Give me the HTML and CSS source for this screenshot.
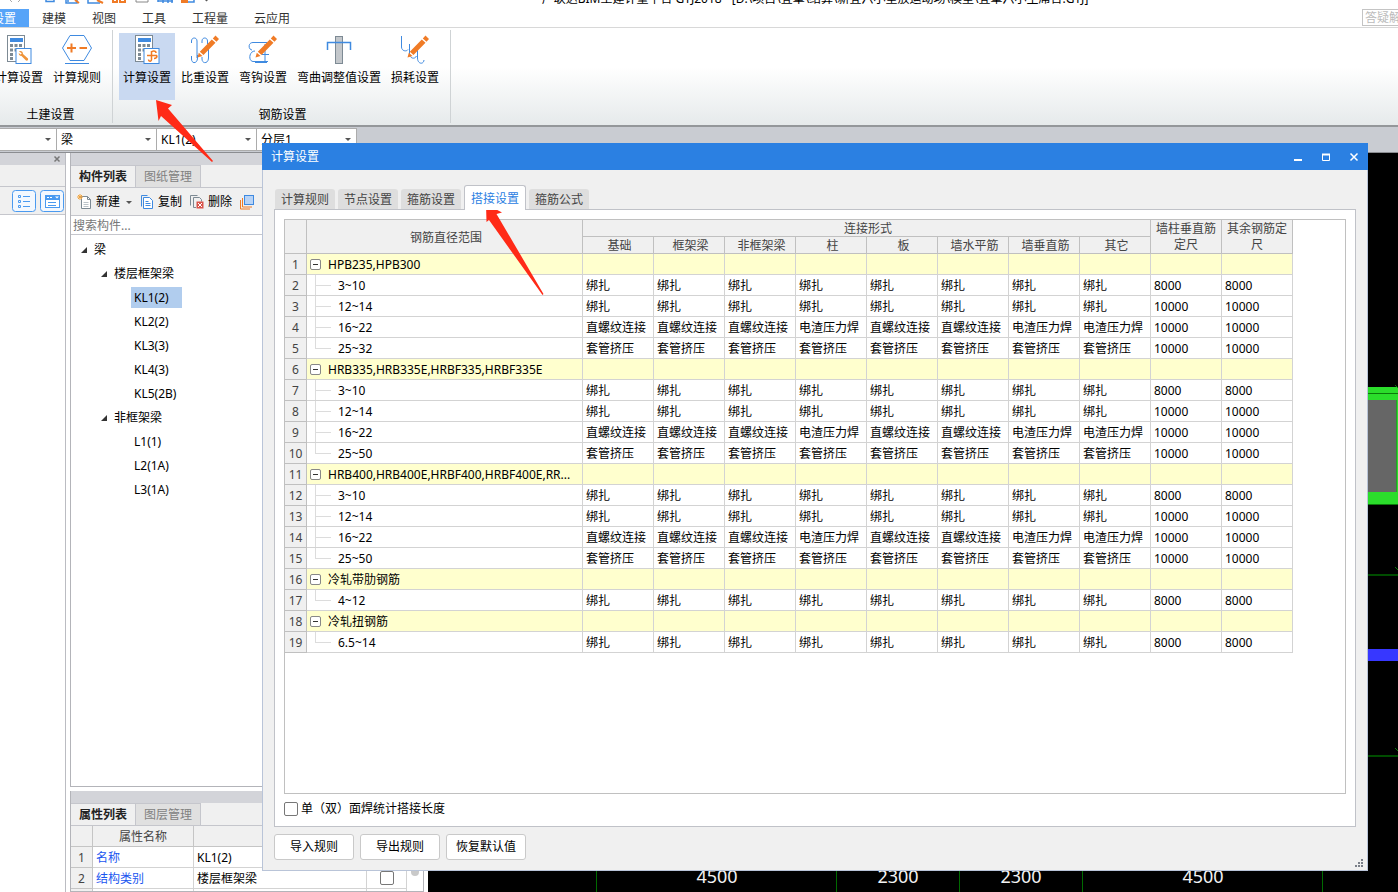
FILE: index.html
```html
<!DOCTYPE html>
<html lang="zh-CN">
<head>
<meta charset="utf-8">
<title>广联达BIM土建计量平台 GTJ2018</title>
<link rel="stylesheet" href="styles.css">
</head>
<body>
<svg class="defs" aria-hidden="true">
  <defs>
    <g id="calc">
      <rect x="3.500" y="1.500" width="17" height="26" fill="#fff" stroke="#7d8a94"/>
      <rect x="6" y="4" width="13" height="4" fill="#3f8ae0"/>
      <path d="M6 10h3v3H6zM10.500 10h3v3h-3zM15 10h3v3h-3zM6 14.500h3v3H6zM10.500 14.500h3v3h-3zM6 19h3v3H6zM6 23h3v3H6z" fill="#7d8a94"/>
      <rect x="12" y="14.500" width="15" height="15" fill="#fff" stroke="#3f8ae0"/>
    </g>
    <g id="pencil">
      <path d="M25.500 1.500l3.500 3.500-2.500 2.700-3.700-3.300zM21.800 5.400l3.700 3.300L13.500 21l-3.700-3.300zM8.800 18.700l3.700 3.200L7.500 23.500z" fill="#f07b26"/>
    </g>
  </defs>
</svg>

<header class="titlebar">
  <svg class="quick" width="220" height="8" viewBox="0 0 220 8" aria-hidden="true">
    <path d="M10 0l2 2M20 0l-2 2" stroke="#aaa" fill="none"/>
    <path d="M46 0v1.500h8V0M66 0v3h11V0M68 0v2M88 0v3h12" stroke="#3f8ae0" stroke-width="1.500" fill="none"/>
    <path d="M75 0l4 3M97 0l6 3M113 0v2h4V0M120 0v2h5V0" stroke="#f07b26" stroke-width="2" fill="none"/>
    <path d="M136 0v2h12V0" stroke="#888" fill="none"/>
    <path d="M158 2V0M163 3V0M168 3V0M172 3V0M158 1h15M188 2h6V0" stroke="#3f8ae0" stroke-width="1.500" fill="none"/>
    <path d="M181 0h7v3h-7z" fill="#f07b26"/>
    <path d="M205 0h3l-1.500 1.500z" fill="#555"/>
  </svg>
  <h1>广联达BIM土建计量平台 GTJ2018 - [D:\项目\宜章\结算\新宜六小室放运动场\模型\宜章六小主席台.GTJ]</h1>
</header>

<nav class="menu">
  <a class="on" href="#">工程设置</a>
  <a href="#">建模</a>
  <a href="#">视图</a>
  <a href="#">工具</a>
  <a href="#">工程量</a>
  <a href="#">云应用</a>
  <input class="ask" type="text" placeholder="答疑解惑" aria-label="答疑解惑">
</nav>

<section class="ribbon">
  <div class="group first">
    <div class="tools">
      <button type="button"><svg width="30" height="30" viewBox="0 0 30 30"><use href="#calc"/><path d="M15 17.500c2-1 4 0 4 2.500l5 4.500c.5 1.500-.5 2.500-2 2L17.500 22c-2 0-3-1.500-2.700-3l1.700 1.500 1.300-1.200z" fill="#f0953a"/></svg>计算设置</button>
      <button type="button"><svg width="30" height="30" viewBox="0 0 30 30"><path d="M8 1.500h14l7.500 12.500L22 26.500H8L.5 14zM3 29.500h24" fill="none" stroke="#3f8ae0"/><path d="M5 14h9M9.500 9.500v9M17.500 14H25" stroke="#f07b26" stroke-width="2"/></svg>计算规则</button>
    </div>
    <div class="caption">土建设置</div>
  </div>
  <div class="group">
    <div class="tools">
      <button type="button" class="pressed"><svg width="30" height="30" viewBox="0 0 30 30"><use href="#calc"/><path d="M19.500 17v8.500c0 2.500-3 2-3 0M15 21.500h10M19.500 18.500c0-2 4.500-2 4.500.5M22 24.500c2.500 0 3-1 3-3" fill="none" stroke="#f07b26" stroke-width="1.500"/></svg>计算设置</button>
      <button type="button"><svg width="30" height="30" viewBox="0 0 30 30"><path d="M1.500 9V7c0-4 5.500-4 5.500 0v17M12 9V7c0-4 5.500-4 5.500 0v3M7.500 21v3c0 6-6 6-6 1v-3M18.500 12v12c0 6-6.500 6-6.500 1v-2" fill="none" stroke="#3f8ae0"/><use href="#pencil"/></svg>比重设置</button>
      <button type="button"><svg width="30" height="30" viewBox="0 0 30 30"><path d="M19 8.500H5c-5 0-5 7-1 7.500M7 17c-6 0-7 10-2 10.500h15M17 10v18M14 20.500h7M7 28.500h12" fill="none" stroke="#3f8ae0"/><use href="#pencil"/></svg>弯钩设置</button>
      <button type="button"><svg width="30" height="30" viewBox="0 0 30 30"><rect x="11.500" y="2.500" width="7" height="27" fill="#c3c7cb" stroke="#7d8a94"/><path d="M3.500 16V8.500h23V16" fill="none" stroke="#3f8ae0" stroke-width="1.500"/></svg>弯曲调整值设置</button>
      <button type="button"><svg width="30" height="30" viewBox="0 0 30 30"><path d="M1.500 2v11c0 4 5 5 6.500 2.500M9.500 10v10c0 4 5 6 7 2M17.500 16v8c0 6 6 7 6.500 2" fill="none" stroke="#3f8ae0"/><use href="#pencil"/></svg>损耗设置</button>
    </div>
    <div class="caption">钢筋设置</div>
  </div>
</section>

<section class="picker">
  <label class="combo short"><select aria-label="楼层"><option></option></select><i></i></label>
  <label class="combo"><select aria-label="构件类型"><option>梁</option></select><i></i></label>
  <label class="combo"><select aria-label="构件"><option>KL1(2)</option></select><i></i></label>
  <label class="combo"><select aria-label="分层"><option>分层1</option></select><i></i></label>
</section>

<main class="work">
  <aside class="nav">
    <div class="grip"><button type="button" aria-label="关闭"><svg width="8" height="8" viewBox="0 0 8 8"><path d="M1.500 1.500l5 5M6.500 1.500l-5 5" stroke="#777" stroke-width="1.500"/></svg></button></div>
    <div class="blank"></div>
    <div class="views">
      <button type="button" aria-label="列表"><svg width="24" height="22" viewBox="0 0 24 22"><rect x=".5" y=".5" width="23" height="21" rx="3" fill="#f3f8fe" stroke="#4a9af0"/><path d="M6.500 5.500h2v2h-2zM6.500 10.500h2v2h-2zM6.500 15.500h2v2h-2z" fill="none" stroke="#4a9af0"/><path d="M11 6.500h7M11 11.500h7M11 16.500h7" stroke="#4a9af0"/></svg></button>
      <button type="button" aria-label="窗口"><svg width="24" height="22" viewBox="0 0 24 22"><rect x=".5" y=".5" width="23" height="21" rx="3" fill="#f3f8fe" stroke="#4a9af0"/><rect x="5.500" y="5.500" width="14" height="12" fill="#fff" stroke="#4a9af0"/><path d="M5 5h15v5H5z" fill="#4a9af0"/><path d="M8 12.500h8M8 15.500h8" stroke="#4a9af0"/><path d="M15 6.500h4l-2 2z" fill="#fff"/><path d="M7 7.500h2M10 7.500h2" stroke="#fff"/></svg></button>
    </div>
  </aside>

  <div class="side">
    <section class="panel list">
      <div class="grip"></div>
      <div class="tabs"><button type="button" class="on">构件列表</button><button type="button">图纸管理</button></div>
      <div class="bar">
        <button type="button"><svg width="16" height="16" viewBox="0 0 16 16"><path d="M4.500 2.500h6l3 3v9h-9z" fill="#fff" stroke="#7d8a94"/><path d="M10.500 2.500v3h3" fill="none" stroke="#7d8a94"/><path d="M6.500 8.500h5M6.500 10.500h5M6.500 12.500h5" stroke="#bbc3c9"/><path d="M3 0v6M0 3h6M1 1l4 4M5 1L1 5" stroke="#f2a33a"/></svg>新建<i></i></button>
        <button type="button"><svg width="16" height="16" viewBox="0 0 16 16"><path d="M2.500 12.500v-11h6" fill="none" stroke="#3f8ae0"/><path d="M4.500 3.500h6l3 3v8h-9z" fill="#fff" stroke="#3f8ae0"/><path d="M6.500 7.500h3M6.500 9.500h5M6.500 11.500h5" stroke="#3f8ae0"/></svg>复制</button>
        <button type="button"><svg width="16" height="16" viewBox="0 0 16 16"><path d="M1.500 11.500v-10h7M4.500 13.500v-10h6l2 2v2" fill="none" stroke="#7d8a94"/><path d="M4.500 13.500H7" stroke="#7d8a94"/><rect x="7.500" y="7.500" width="7" height="7" fill="#d9534a"/><path d="M9 9l4 4M13 9l-4 4" stroke="#fff"/></svg>删除</button>
        <button type="button" aria-label="层间复制"><svg width="16" height="16" viewBox="0 0 16 16"><path d="M1.500 6v9H11M3.500 4v9H13" fill="none" stroke="#f07b26"/><rect x="5.500" y="1.500" width="9" height="9" fill="#b8d3f6" stroke="#3f8ae0"/></svg></button>
      </div>
      <input class="search" type="text" placeholder="搜索构件..." aria-label="搜索构件">
      <ul class="tree">
        <li><span class="node"><b></b>梁</span>
          <ul>
            <li><span class="node"><b></b>楼层框架梁</span>
              <ul>
                <li><span class="leaf on">KL1(2)</span></li>
                <li><span class="leaf">KL2(2)</span></li>
                <li><span class="leaf">KL3(3)</span></li>
                <li><span class="leaf">KL4(3)</span></li>
                <li><span class="leaf">KL5(2B)</span></li>
              </ul>
            </li>
            <li><span class="node"><b></b>非框架梁</span>
              <ul>
                <li><span class="leaf">L1(1)</span></li>
                <li><span class="leaf">L2(1A)</span></li>
                <li><span class="leaf">L3(1A)</span></li>
              </ul>
            </li>
          </ul>
        </li>
      </ul>
    </section>
    <section class="panel props">
      <div class="grip"></div>
      <div class="tabs"><button type="button" class="on">属性列表</button><button type="button">图层管理</button></div>
      <div class="scrolled">
        <table class="grid">
          <colgroup><col class="c-no"><col class="c-name"><col><col class="c-add"></colgroup>
          <thead><tr><th></th><th>属性名称</th><th></th><th></th></tr></thead>
          <tbody>
            <tr><th>1</th><td class="link">名称</td><td>KL1(2)</td><td></td></tr>
            <tr><th>2</th><td class="link">结构类别</td><td>楼层框架梁</td><td class="mid"><input type="checkbox" aria-label="附加"></td></tr>
            <tr><th></th><td></td><td></td><td></td></tr>
          </tbody>
        </table>
        <div class="track"><span></span></div>
      </div>
    </section>
  </div>

  <div class="canvas">
    <svg width="970" height="739" viewBox="0 0 970 739">
      <path d="M930 234h40v117h-40z" fill="#2bdd2b"/>
      <path d="M930 240.500h40M930 351.500h40" stroke="#0b7a0b"/>
      <path d="M930 247h38v92h-38z" fill="#666"/>
      <path d="M968.500 247v92" stroke="#2a9a2a"/>
      <path d="M930 422h40M930 603h40" stroke="#004c00" stroke-width="2"/>
      <path d="M967 414l3 3M967 595l3 3M967 232l3 3" stroke="#0a7a0a"/>
      <path d="M930 496h40v12h-40z" fill="#3737ff"/>
      <path d="M168.500 700v39M408.500 700v39M531.500 700v39M654.500 700v39M894.500 700v39" stroke="#006a00"/>
      <g class="dims"><text x="289" y="730">4500</text><text x="470" y="730">2300</text><text x="593" y="730">2300</text><text x="775" y="730">4500</text></g>
    </svg>
  </div>
</main>

<section class="dialog" role="dialog" aria-label="计算设置">
  <header>
    <h2>计算设置</h2>
    <button type="button" aria-label="最小化"><svg width="10" height="10" viewBox="0 0 10 10"><path d="M1 8h8" stroke="#fff" stroke-width="2"/></svg></button>
    <button type="button" aria-label="最大化"><svg width="10" height="10" viewBox="0 0 10 10"><path d="M1.500 2v6.500h7V2" fill="none" stroke="#fff"/><path d="M1 2.500h8" stroke="#fff" stroke-width="2"/></svg></button>
    <button type="button" aria-label="关闭"><svg width="10" height="10" viewBox="0 0 10 10"><path d="M1.500 1.500l7 7M8.500 1.500l-7 7" stroke="#fff" stroke-width="1.500"/></svg></button>
  </header>
  <div class="sheet-tabs">
    <button type="button">计算规则</button>
    <button type="button">节点设置</button>
    <button type="button">箍筋设置</button>
    <button type="button" class="on">搭接设置</button>
    <button type="button">箍筋公式</button>
  </div>
  <div class="sheet">
    <div class="frame">
      <table class="rules">
        <colgroup><col class="c-no"><col class="c-range"><col span="10"></colgroup>
        <thead>
          <tr><th rowspan="2"></th><th rowspan="2">钢筋直径范围</th><th colspan="8">连接形式</th><th rowspan="2" class="wrap">墙柱垂直筋定尺</th><th rowspan="2" class="wrap">其余钢筋定尺</th></tr>
          <tr><th>基础</th><th>框架梁</th><th>非框架梁</th><th>柱</th><th>板</th><th>墙水平筋</th><th>墙垂直筋</th><th>其它</th></tr>
        </thead>
        <tbody>
          <tr class="head"><th>1<td><button type="button" aria-label="折叠"></button>HPB235,HPB300<td><td><td><td><td><td><td><td><td><td></tr>
          <tr><th>2<td class="sub">3~10<td>绑扎<td>绑扎<td>绑扎<td>绑扎<td>绑扎<td>绑扎<td>绑扎<td>绑扎<td>8000<td>8000</tr>
          <tr><th>3<td class="sub">12~14<td>绑扎<td>绑扎<td>绑扎<td>绑扎<td>绑扎<td>绑扎<td>绑扎<td>绑扎<td>10000<td>10000</tr>
          <tr><th>4<td class="sub">16~22<td>直螺纹连接<td>直螺纹连接<td>直螺纹连接<td>电渣压力焊<td>直螺纹连接<td>直螺纹连接<td>电渣压力焊<td>电渣压力焊<td>10000<td>10000</tr>
          <tr><th>5<td class="sub end">25~32<td>套管挤压<td>套管挤压<td>套管挤压<td>套管挤压<td>套管挤压<td>套管挤压<td>套管挤压<td>套管挤压<td>10000<td>10000</tr>
          <tr class="head"><th>6<td><button type="button" aria-label="折叠"></button>HRB335,HRB335E,HRBF335,HRBF335E<td><td><td><td><td><td><td><td><td><td></tr>
          <tr><th>7<td class="sub">3~10<td>绑扎<td>绑扎<td>绑扎<td>绑扎<td>绑扎<td>绑扎<td>绑扎<td>绑扎<td>8000<td>8000</tr>
          <tr><th>8<td class="sub">12~14<td>绑扎<td>绑扎<td>绑扎<td>绑扎<td>绑扎<td>绑扎<td>绑扎<td>绑扎<td>10000<td>10000</tr>
          <tr><th>9<td class="sub">16~22<td>直螺纹连接<td>直螺纹连接<td>直螺纹连接<td>电渣压力焊<td>直螺纹连接<td>直螺纹连接<td>电渣压力焊<td>电渣压力焊<td>10000<td>10000</tr>
          <tr><th>10<td class="sub end">25~50<td>套管挤压<td>套管挤压<td>套管挤压<td>套管挤压<td>套管挤压<td>套管挤压<td>套管挤压<td>套管挤压<td>10000<td>10000</tr>
          <tr class="head"><th>11<td><button type="button" aria-label="折叠"></button>HRB400,HRB400E,HRBF400,HRBF400E,RR...<td><td><td><td><td><td><td><td><td><td></tr>
          <tr><th>12<td class="sub">3~10<td>绑扎<td>绑扎<td>绑扎<td>绑扎<td>绑扎<td>绑扎<td>绑扎<td>绑扎<td>8000<td>8000</tr>
          <tr><th>13<td class="sub">12~14<td>绑扎<td>绑扎<td>绑扎<td>绑扎<td>绑扎<td>绑扎<td>绑扎<td>绑扎<td>10000<td>10000</tr>
          <tr><th>14<td class="sub">16~22<td>直螺纹连接<td>直螺纹连接<td>直螺纹连接<td>电渣压力焊<td>直螺纹连接<td>直螺纹连接<td>电渣压力焊<td>电渣压力焊<td>10000<td>10000</tr>
          <tr><th>15<td class="sub end">25~50<td>套管挤压<td>套管挤压<td>套管挤压<td>套管挤压<td>套管挤压<td>套管挤压<td>套管挤压<td>套管挤压<td>10000<td>10000</tr>
          <tr class="head"><th>16<td><button type="button" aria-label="折叠"></button>冷轧带肋钢筋<td><td><td><td><td><td><td><td><td><td></tr>
          <tr><th>17<td class="sub end">4~12<td>绑扎<td>绑扎<td>绑扎<td>绑扎<td>绑扎<td>绑扎<td>绑扎<td>绑扎<td>8000<td>8000</tr>
          <tr class="head"><th>18<td><button type="button" aria-label="折叠"></button>冷轧扭钢筋<td><td><td><td><td><td><td><td><td><td></tr>
          <tr><th>19<td class="sub end">6.5~14<td>绑扎<td>绑扎<td>绑扎<td>绑扎<td>绑扎<td>绑扎<td>绑扎<td>绑扎<td>8000<td>8000</tr>
        </tbody>
      </table>
    </div>
    <label class="tick"><input type="checkbox">单（双）面焊统计搭接长度</label>
  </div>
  <footer>
    <button type="button">导入规则</button>
    <button type="button">导出规则</button>
    <button type="button">恢复默认值</button>
    <svg class="resize" width="9" height="9" viewBox="0 0 9 9"><path d="M6 0h2v2H6zM3 3h2v2H3zM6 3h2v2H6zM0 6h2v2H0zM3 6h2v2H3zM6 6h2v2H6z" fill="#7a7f88"/></svg>
  </footer>
</section>

<svg class="marks" width="560" height="300" viewBox="0 0 560 300" aria-hidden="true">
  <path d="M156 100l16 5-4 3.500L213 161l-1 1-51-46-2.500 5z" fill="#ff2a17"/>
  <path d="M486 204l16 8.500-5.500 1.500L543.500 294l-1 1-53.500-75-2.500 2z" fill="#ff2a17"/>
</svg>
</body>
</html>
```

FILE: styles.css
```css
* { box-sizing: border-box; }

body {
  margin: 0;
  height: 100vh;
  overflow: hidden;
  position: relative;
  display: flex;
  flex-direction: column;
  background: #fff;
  color: #000;
  font: 12px/16px "Noto Sans", "Noto Sans CJK SC", sans-serif;
}

button, input, select {
  font: inherit;
  color: inherit;
  margin: 0;
  padding: 0;
  border: 0;
  background: none;
  border-radius: 0;
  outline: 0;
}

h1, h2, ul { margin: 0; padding: 0; font: inherit; list-style: none; }

input[type="checkbox"] {
  appearance: none;
  width: 14px;
  height: 14px;
  border: 1px solid #777;
  border-radius: 2px;
  background: #fff;
}

.defs { position: absolute; width: 0; height: 0; }

/* title and menu */
.titlebar {
  flex: none;
  height: 8px;
  display: flex;
  align-items: flex-end;
  overflow: hidden;
}
.quick { flex: none; }
.titlebar h1 { flex: 1; padding: 0 0 1px 12px; text-align: center; white-space: nowrap; }

.menu {
  flex: none;
  height: 20px;
  display: flex;
  border-bottom: 1px solid #d8d8d8;
}
.menu a {
  padding: 3px 13px 0;
  color: #333;
  text-decoration: none;
}
.menu .on {
  width: 29px;
  margin-top: 1px;
  padding-top: 2px;
  padding-left: 0;
  display: flex;
  justify-content: flex-end;
  overflow: hidden;
  white-space: nowrap;
  background: #57a4f8;
  color: #fff;
}
.ask {
  width: 36px;
  height: 17px;
  margin: 1px 0 0 auto;
  padding-left: 2px;
  border: 1px solid #c4c4c4;
  border-right: 0;
}
.ask::placeholder { color: #bbb; opacity: 1; }

/* ribbon */
.ribbon {
  flex: none;
  height: 99px;
  display: flex;
  padding: 2px 0;
  border-bottom: 2px solid #94979a;
  background: linear-gradient(#fff 40%, #e6eaeb);
}
.group {
  display: flex;
  flex-direction: column;
  justify-content: space-between;
  padding: 3px 7px 0 6px;
  border-right: 1px solid #cfd3d5;
}
.group.first { width: 113px; align-items: flex-end; overflow: hidden; }
.tools { display: flex; gap: 2px; }
.tools button {
  height: 67px;
  padding: 1px 4px 0;
  display: flex;
  flex-direction: column;
  align-items: center;
  gap: 6px;
  white-space: nowrap;
}
.tools .pressed { background: #c9d9f1; }
.caption { padding-left: 3px; text-align: center; }
.first .caption { width: 112px; }

/* selectors */
.picker {
  flex: none;
  height: 26px;
  display: flex;
  padding-top: 1px;
  background: #c9ccd2;
  border-bottom: 1px solid #8b8d91;
}
.combo {
  width: 100px;
  height: 23px;
  display: flex;
  align-items: center;
  padding-right: 5px;
  border: 1px solid #acacac;
  border-left: 0;
  background: #fff;
}
.combo.short { width: 57px; }
.combo select { flex: 1; min-width: 0; padding-left: 4px; appearance: none; }
.combo i, .bar i {
  border: 3px solid transparent;
  border-top-color: #555;
  border-bottom: 0;
}

/* work area */
.work { flex: 1; min-height: 0; display: flex; }
.grip { flex: none; height: 12px; background: #d3d4d9; }
.nav { width: 66px; border-right: 1px solid #bbbcc2; }
.nav .grip { display: flex; justify-content: flex-end; align-items: center; padding-right: 4px; }
.nav .grip button { display: flex; }
.blank { height: 22px; background: #f0f0f0; border-bottom: 1px solid #c5c6cc; }
.views {
  height: 28px;
  display: flex;
  align-items: center;
  justify-content: flex-end;
  gap: 4px;
  padding-right: 1px;
  background: #f0f0f0;
  border-bottom: 1px solid #c5c6cc;
}
.views button { display: flex; }

.side { width: 354px; margin-left: 4px; display: flex; flex-direction: column; gap: 4px; }
.panel { border: 1px solid #b3b4b9; border-top: 0; display: flex; flex-direction: column; overflow: hidden; }
.list { flex: 1; }
.props { flex: 0 0 101px; }
.tabs { flex: none; height: 23px; display: flex; background: #f0f0f0; border-bottom: 1px solid #c5c6cc; }
.tabs button { width: 65px; padding-top: 1px; background: #e0e0e0; color: #808080; border: 1px solid #c5c6cc; border-width: 1px 1px 0 0; }
.tabs .on { background: #f0f0f0; color: #222; font-weight: bold; }
.bar {
  flex: none;
  height: 28px;
  display: flex;
  align-items: center;
  gap: 7px;
  padding: 1px 0 0 6px;
  background: #f0f0f0;
  border-bottom: 1px solid #c5c6cc;
}
.bar button { display: flex; align-items: center; gap: 3px; }
.bar i { margin-left: 3px; }
.search { flex: none; height: 19px; padding-left: 2px; border-bottom: 1px solid #c5c6cc; }
.search::placeholder { color: #777; opacity: 1; }

.tree { padding: 3px 0 0 10px; }
.tree ul { padding-left: 20px; }
.tree ul ul { padding-left: 30px; }
.node { display: flex; align-items: center; gap: 7px; height: 24px; }
.node b { width: 6px; height: 6px; background: #333; clip-path: polygon(100% 0, 100% 100%, 0 100%); }
.leaf { display: inline-block; height: 21px; margin: 1px 0 2px; padding: 3px 13px 0 3px; vertical-align: top; }
.leaf.on { background: #b1cdee; }

.scrolled { display: flex; flex: 1; min-height: 0; }
.grid { flex: 1; table-layout: fixed; border-spacing: 0; align-self: flex-start; }
.c-no { width: 22px; }
.grid .c-name { width: 101px; }
.grid .c-add { width: 40px; }
.grid th, .grid td {
  height: 21px;
  padding: 2px 0 0 3px;
  border: 1px solid #d3d3d3;
  border-width: 0 1px 1px 0;
  line-height: 16px;
  text-align: left;
}
.grid th { padding-left: 0; background: #f0f0f0; color: #444; font-weight: normal; text-align: center; border-color: #c5c5c5; }
.grid .link { color: #1a56f0; }
.grid .mid { padding: 0; text-align: center; }
.grid .mid input { display: block; margin: 0 auto; }
.track { width: 16px; padding: 20px 4px 0; }
.track span { display: block; width: 8px; height: 30px; border-radius: 4px; background: #c9c9c9; }

.canvas { flex: 1; margin-left: 4px; display: flex; justify-content: flex-end; background: #000; overflow: hidden; }
.canvas svg { flex: none; }
.dims { fill: #f2f2f2; font-size: 18px; text-anchor: middle; }

/* dialog */
.dialog {
  position: absolute;
  top: 143px;
  right: 30px;
  bottom: 21px;
  left: 262px;
  display: flex;
  flex-direction: column;
  background: #f0f0f0;
  border: 1px solid #b9c4d8;
  border-top: 0;
}
.dialog header {
  flex: none;
  height: 27px;
  margin: 0 -1px;
  display: flex;
  align-items: center;
  gap: 18px;
  padding: 0 9px;
  background: #2b80e2;
  color: #fff;
}
.dialog h2 { flex: 1; }
.dialog header button { display: flex; }
.sheet-tabs { flex: none; display: flex; align-items: flex-end; gap: 3px; margin-top: 15px; padding-left: 12px; }
.sheet-tabs button { height: 20px; padding: 2px 6px 0; border-radius: 3px 3px 0 0; background: #dedede; color: #444; }
.sheet-tabs .on {
  z-index: 1;
  height: 25px;
  margin-bottom: -1px;
  border: 1px solid #c0c2c8;
  border-bottom: 0;
  background: #fff;
  color: #2b80e2;
}
.sheet {
  flex: 1;
  min-height: 0;
  display: flex;
  flex-direction: column;
  margin: 0 11px;
  padding: 9px;
  border: 1px solid #c0c2c8;
  background: #fff;
}
.frame { flex: 1; min-height: 0; overflow: hidden; border: 1px solid #c0c0c0; }
.rules { width: 1008px; table-layout: fixed; border-spacing: 0; }
.rules .c-range { width: 276px; }
.rules th, .rules td {
  height: 21px;
  padding: 2px 0 0 3px;
  border: 1px solid #d3d3d3;
  border-width: 0 1px 1px 0;
  line-height: 16px;
  text-align: left;
  white-space: nowrap;
}
.rules th { padding-left: 0; background: #f0f0f0; color: #444; border-color: #c0c0c0; font-weight: normal; text-align: center; }
.rules thead th { height: 17px; padding: 2px 0 0 3px; line-height: 14px; }
.rules thead .wrap { padding: 0 4px; line-height: 16px; white-space: normal; }
.head td { background: #ffffce; }
.head button {
  width: 11px;
  height: 11px;
  margin-right: 7px;
  border: 1px solid #888;
  border-radius: 2px;
  background: linear-gradient(#333, #333) center / 5px 1px no-repeat #fff;
}
.rules .sub {
  padding-left: 31px;
  background:
    linear-gradient(#dcdcdc, #dcdcdc) 8px 0 / 1px 100% no-repeat,
    linear-gradient(#dcdcdc, #dcdcdc) 8px 10px / 16px 1px no-repeat;
}
.rules .end {
  background:
    linear-gradient(#dcdcdc, #dcdcdc) 8px 0 / 1px 10px no-repeat,
    linear-gradient(#dcdcdc, #dcdcdc) 8px 10px / 16px 1px no-repeat;
}
.tick { flex: none; display: flex; align-items: center; gap: 3px; margin-top: 7px; }
.dialog footer { flex: none; display: flex; gap: 6px; padding: 7px 3px 10px 11px; }
.dialog footer button { width: 80px; height: 26px; border: 1px solid #c9c9c9; border-radius: 3px; background: #fff; }
.resize { align-self: flex-end; margin: 0 0 -8px auto; }

.marks { position: absolute; top: 0; left: 0; pointer-events: none; }
```
